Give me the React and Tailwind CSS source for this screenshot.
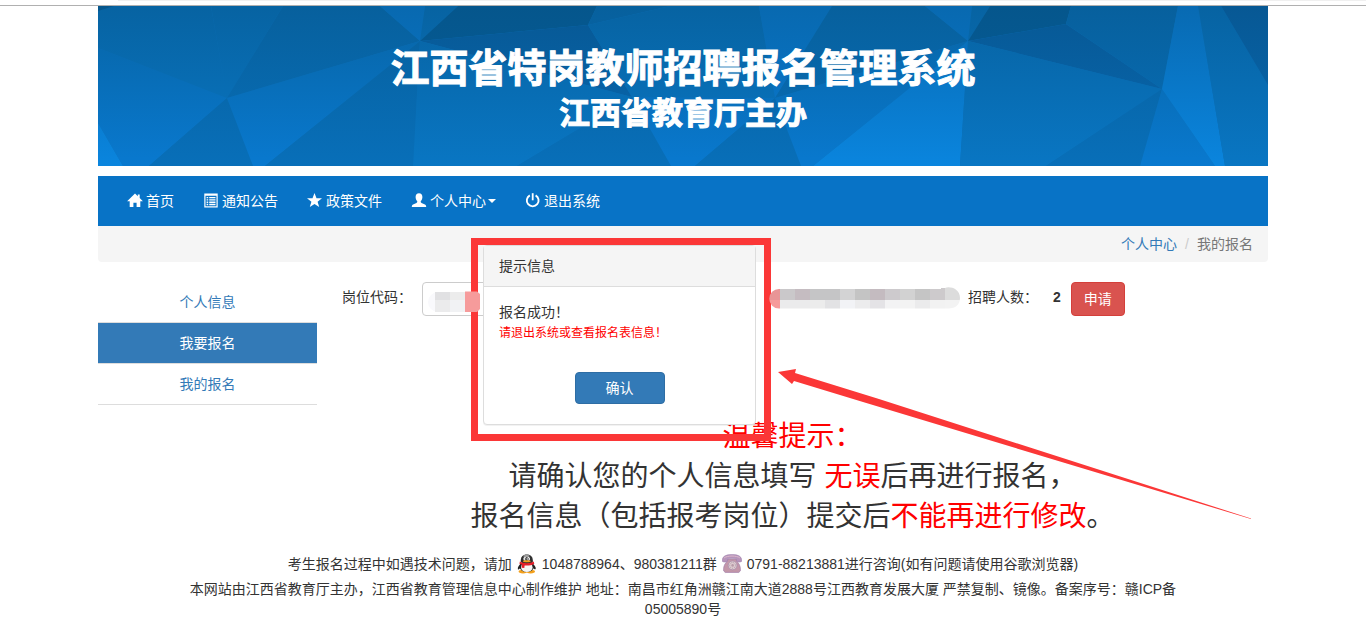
import React from "react";

const FACETS = [
  ["0,0 113,0 129,92 0,42", "mid"],
  ["113,0 185,0 129,92", "mid"],
  ["185,0 282,0 322,35 129,92", "dim"],
  ["0,0 16,0 0,5", "dark"],
  ["0,42 129,92 51,160 25,160 0,117", "soft"],
  ["0,117 25,160 0,160", "bright"],
  ["129,92 51,160 155,160", "dim"],
  ["129,92 322,35 167,160 155,160", "soft"],
  ["322,35 167,160 315,160", "dim"],
  ["282,0 327,0 322,35", "light"],
  ["327,0 360,0 322,35", "mid"],
  ["360,0 499,0 490,19 322,35", "dark"],
  ["499,0 572,0 490,19", "dim"],
  ["322,35 490,19 534,91", "deep"],
  ["322,35 534,91 419,160 315,160", "mid"],
  ["534,91 419,160 573,160", "dim"],
  ["572,0 661,0 677,92 534,91 490,19", "mid"],
  ["534,91 677,92 597,160 573,160", "soft"],
  ["677,92 597,160 703,160", "dim"],
  ["661,0 734,0 677,92", "light"],
  ["734,0 827,0 870,35 677,92", "dim"],
  ["677,92 870,35 715,160 703,160", "soft"],
  ["870,35 715,160 862,160", "bright"],
  ["827,0 874,0 870,35", "light"],
  ["874,0 892,0 870,35", "mid"],
  ["892,0 973,0 968,18 870,35", "dark"],
  ["870,35 968,18 1064,83", "deep"],
  ["870,35 1064,83 948,160 862,160", "mid"],
  ["973,0 1080,0 1064,83 968,18", "dim"],
  ["1064,83 948,160 1042,160", "dim"],
  ["1064,83 1042,160 1117,160", "soft"],
  ["1080,0 1100,0 1127,160 1117,160 1064,83", "bright"],
  ["1100,0 1123,0 1170,79 1170,160 1127,160", "mid"],
  ["1123,0 1170,0 1170,79", "deep"],
];

const TONES = {
  dark: ["#05568c", "#06609e"],
  deep: ["#075894", "#0869b2"],
  dim: ["#07609d", "#086fb9"],
  mid: ["#0763a2", "#0976c3"],
  soft: ["#0764a4", "#0979cf"],
  light: ["#0869b0", "#0979d0"],
  bright: ["#086ab2", "#0a85de"],
};

function Banner() {
  return (
    <header className="relative h-40 overflow-hidden bg-[#086cb4]">
      <svg className="absolute inset-0 h-full w-full" viewBox="0 0 1170 160" preserveAspectRatio="none" aria-hidden="true">
        <defs>
          {Object.entries(TONES).map(([name, [from, to]]) => (
            <linearGradient key={name} id={name} gradientUnits="userSpaceOnUse" x1="0" y1="0" x2="0" y2="160">
              <stop offset="0" stopColor={from} />
              <stop offset="1" stopColor={to} />
            </linearGradient>
          ))}
        </defs>
        {FACETS.map(([points, tone]) => (
          <polygon key={points} points={points} fill={`url(#${tone})`} />
        ))}
      </svg>
      <div className="relative flex flex-col items-center pt-9 font-bold text-white [-webkit-text-stroke:1px_white]">
        <h1 className="text-[39px] leading-[54px]">江西省特岗教师招聘报名管理系统</h1>
        <p className="text-[31px] leading-[36px]">江西省教育厅主办</p>
      </div>
    </header>
  );
}

function Icon({ children }) {
  return (
    <svg className="h-3.5 w-3.5 shrink-0 overflow-visible" viewBox="0 0 14 14" fill="currentColor" aria-hidden="true">
      {children}
    </svg>
  );
}

const HomeIcon = () => (
  <Icon>
    <path d="M7 -0.600 L9.8 2.200 V0.400 H11.700 V4.100 L14.900 7.300 H12.300 V13 H8.600 V8.800 H5.400 V13 H1.700 V7.300 H-0.900 Z" />
  </Icon>
);
const ListIcon = () => (
  <Icon>
    <path fillRule="evenodd" d="M0.3 -0.500H13.7V13.500H0.3Z M1.5 1.800V12.300H12.5V1.800Z M2.6 2.900H4.2V4.300H2.6Z M5.2 2.900H11.5V4.300H5.2Z M2.6 5.2H4.2V6.600H2.6Z M5.2 5.2H11.5V6.600H5.2Z M2.6 7.5H4.2V8.900H2.6Z M5.2 7.5H11.5V8.900H5.2Z M2.6 9.800H4.2V11.200H2.6Z M5.2 9.800H11.5V11.200H5.2Z" />
  </Icon>
);
const StarIcon = () => (
  <Icon>
    <path d="M6.500 -1 L8.500 4.300 H14 L9.6 7.700 L11.2 13 L6.500 9.900 L1.800 13 L3.400 7.700 L-1 4.300 H4.500 Z" />
  </Icon>
);
const UserIcon = () => (
  <Icon>
    <path d="M7 -0.800 C9.2 -0.800 10.4 0.800 10.4 2.900 C10.4 4.700 9.6 6.200 8.8 7.100 C8.6 8.100 8.9 8.600 9.5 8.900 L13 10.400 C13.900 10.900 14.200 11.500 14.200 13 H-0.200 C-0.200 11.500 0.100 10.900 1 10.400 L4.500 8.900 C5.100 8.600 5.400 8.100 5.200 7.100 C4.400 6.200 3.600 4.700 3.600 2.900 C3.600 0.800 4.800 -0.800 7 -0.800 Z" />
  </Icon>
);
const PowerIcon = () => (
  <Icon>
    <path d="M3.800 1.300 A5.900 5.900 0 1 0 9.600 1.300" fill="none" stroke="currentColor" strokeWidth="1.9" />
    <path d="M5.800 -0.800H7.600V6.300H5.800Z" />
  </Icon>
);

const NAV = [
  ["首页", HomeIcon],
  ["通知公告", ListIcon],
  ["政策文件", StarIcon],
  ["个人中心", UserIcon, true],
  ["退出系统", PowerIcon],
];

function QQIcon() {
  return (
    <svg className="h-5 w-5 shrink-0" viewBox="0 0 20 20" role="img" aria-label="QQ">
      <ellipse cx="6" cy="17.600" rx="4.4" ry="1.8" fill="#f3a01c" />
      <ellipse cx="13.6" cy="17.600" rx="4.4" ry="1.8" fill="#f3a01c" />
      <path d="M4.5 9 C2 11 0.4 13.5 0.900 15.2 C1.6 15.8 2.800 14.8 3.600 13.8 L16 13.8 C17 15 18 15.8 18.7 15 C19.200 13 17.3 10.8 15 9 Z" fill="#202020" />
      <ellipse cx="9.800" cy="12.8" rx="7.200" ry="5.2" fill="#222" />
      <ellipse cx="9.800" cy="13.4" rx="5.8" ry="4.7" fill="#f6f6f6" />
      <path d="M3.700 7.8 C3.600 3 5.800 0.600 9.800 0.600 C13.8 0.600 16 3 15.900 7.8 L14 10 H6 Z" fill="#303030" />
      <ellipse cx="9.5" cy="2.1" rx="3.2" ry="1.1" fill="#a5a5a5" />
      <ellipse cx="7.900" cy="4.800" rx="1.5" ry="1.9" fill="#fff" />
      <ellipse cx="11.5" cy="4.800" rx="1.5" ry="1.9" fill="#fff" />
      <circle cx="8.4" cy="5" r="0.7" fill="#111" />
      <circle cx="11.1" cy="5" r="0.7" fill="#111" />
      <ellipse cx="9.800" cy="7.3" rx="3.8" ry="1" fill="#f3a01c" />
      <path d="M2.900 7.500 C6.500 9.800 13 9.800 16.7 7.500 L17.3 9.700 C14 11.600 10.5 11.800 7.600 11.400 L7.3 14 L4.600 13.8 L5 10.800 L2.400 9.700 Z" fill="#e5202b" />
    </svg>
  );
}

function PhoneIcon() {
  return (
    <svg className="h-5 w-5 shrink-0" viewBox="0 0 20 20" role="img" aria-label="电话">
      <path d="M5.5 5 H14.5 L15.6 8.2 C17.8 10.4 18.800 13.7 18.3 17 L16.8 18.4 H3.2 L1.7 17 C1.200 13.7 2.2 10.4 4.4 8.2 Z" fill="#c397a9" stroke="#a27fa9" strokeWidth="0.7" />
      <path d="M0.4 7.4 C-0.2 3 2.8 0.6 10 0.6 C17.2 0.6 20.2 3 19.6 7.4 C17.8 8.4 15.5 8.2 14.5 7.2 L14.3 4.8 C11.5 4.2 8.5 4.2 5.7 4.8 L5.5 7.2 C4.5 8.2 2.2 8.4 0.4 7.4 Z" fill="#b794bb" stroke="#9f84af" strokeWidth="0.6" />
      <path d="M2.2 3.9 C5 1.4 15 1.4 17.8 3.9" fill="none" stroke="#dcb9cc" strokeWidth="1" />
      <circle cx="10.6" cy="11.4" r="4.4" fill="#dfcbd0" stroke="#a58baa" strokeWidth="0.7" />
      <circle cx="10.6" cy="11.4" r="2.9" fill="none" stroke="#aa9cab" strokeWidth="1" strokeDasharray="1 1" />
      <circle cx="10.6" cy="11.4" r="1.3" fill="#b79ba8" />
    </svg>
  );
}

const CODE_BLOCKS = [
  [7, "#e1e1e3", "#ebebec"],
  [22, "#ececec", "#f1f2f4"],
];

const NAME_TOP = ["#cac8ca", "#c5bcc1", "#c5c5c6", "#c5c5c6", "#d3d3d4", "#c4c4c4", "#c4bbc0", "#cdcacd", "#d2d2d2", "#c5c5c5", "#cdcacc", "#dcdcdc"];
const NAME_BOTTOM = ["#ebebec", "#ebebec", "#ececec", "#e2e2e4", "#f2f3f6", "#ececed", "#e4e3e6", "#f3f3f4", "#f3f3f3", "#ebebec", "#f2f2f2", "#f3f3f3"];

function SignUpForm() {
  return (
    <form className="flex h-[34px] items-start pl-[25px]" onSubmit={(e) => e.preventDefault()}>
      <label htmlFor="code" className="w-20 shrink-0 leading-[30px]">
        岗位代码：
      </label>
      <div className="relative mr-[47px] w-[300px] shrink-0">
        <input id="code" type="text" className="h-[34px] w-full rounded border border-[#ccc] bg-white px-3 outline-none" />
        <svg className="absolute top-2 left-1.5 z-20 h-6 w-[54px]" viewBox="0 0 54 24" aria-hidden="true">
          <circle cx="10" cy="12" r="10" fill="#f9f9fc" />
          {CODE_BLOCKS.map(([x, top, bottom]) => (
            <g key={x}>
              <rect x={x} y="2" width="15" height="8" fill={top} />
              <rect x={x} y="10" width="15" height="12" fill={bottom} />
            </g>
          ))}
          <path d="M37 1.500H49 L52 4 V19 L49 22 H37Z" fill="#f69b9b" />
        </svg>
      </div>
      <svg className="relative z-20 mt-[5px] mr-2 h-[22px] w-[191px] shrink-0" viewBox="0 0 191 22" aria-hidden="true">
        <defs>
          <clipPath id="strip">
            <path d="M10 2 H172 V1 H176 C180 -1 191 1 191 11 C191 18 186 22 178 21.500 H10 A9.700 9.700 0 0 1 10 2Z" />
          </clipPath>
        </defs>
        <g clipPath="url(#strip)">
          <rect width="11" height="13" fill="#e89596" />
          <rect y="13" width="11" height="9" fill="#f69b9b" />
          {NAME_TOP.map((color, i) => (
            <g key={i}>
              <rect x={11 + i * 15} y="0" width="15" height="13" fill={color} />
              <rect x={11 + i * 15} y="13" width="15" height="9" fill={NAME_BOTTOM[i]} />
            </g>
          ))}
        </g>
      </svg>
      <span className="w-[85px] shrink-0 leading-[30px]">招聘人数：</span>
      <strong className="mr-2.5 leading-[30px]">2</strong>
      <button type="submit" className="h-[34px] shrink-0 rounded border border-[#d43f3a] bg-[#d9534f] px-3 text-white">
        申请
      </button>
    </form>
  );
}

function SuccessDialog() {
  return (
    <div className="absolute top-[232px] left-[373px] z-10 w-[300px] border-7 border-[#fb3737] pr-2 pb-[9px] pl-[5px]">
      <section role="dialog" aria-labelledby="dialog-title" className="rounded border border-[#ddd] bg-white shadow-2xs">
        <h2 id="dialog-title" className="border-b border-[#ddd] bg-[#f5f5f5] px-[15px] py-2.5">
          提示信息
        </h2>
        <div className="px-[15px] pt-[15px] pb-5">
          <p>报名成功！</p>
          <p className="text-xs leading-[22px] text-[#f00]">请退出系统或查看报名表信息！</p>
          <div className="mt-7 flex justify-center">
            <button type="button" className="h-8 w-[90px] rounded border border-[#2e6da4] bg-[#337ab7] text-white">
              确认
            </button>
          </div>
        </div>
      </section>
    </div>
  );
}

export default function App() {
  return (
    <div className="bg-white text-sm leading-5 text-[#333] [font-family:'Liberation_Sans','Noto_Sans_CJK_SC',sans-serif]">
      <div className="h-1.5 border-b border-[#b0b0b0] pl-[118px]">
        <div className="h-px bg-[#f0f0f0]" />
      </div>
      <div className="relative mx-auto max-w-[1170px]">
        <Banner />
        <nav className="mt-2.5 flex h-[50px] items-center gap-[30px] bg-[#0873c6] px-[30px] text-white">
          {NAV.map(([text, Glyph, menu]) => (
            <a key={text} href="#" className="flex items-center gap-1">
              <Glyph />
              <span className="flex items-center gap-0.5">
                {text}
                {menu && <span className="border-x-4 border-t-4 border-x-transparent border-t-white" />}
              </span>
            </a>
          ))}
        </nav>
        <ol className="flex justify-end rounded-b bg-[#f5f5f5] px-[15px] py-2">
          <li>
            <a href="#" className="text-[#337ab7]">
              个人中心
            </a>
          </li>
          <li className="px-2 text-[#ccc]" aria-hidden="true">
            /
          </li>
          <li className="text-[#777]">我的报名</li>
        </ol>

        <div className="mt-5 flex">
          <aside className="w-[219px] shrink-0">
            <ul className="text-center leading-10">
              <li className="border-b border-[#ddd]">
                <a href="#" className="block text-[#337ab7]">个人信息</a>
              </li>
              <li className="border-b border-[#ddd]">
                <a href="#" className="block bg-[#337ab7] text-white">我要报名</a>
              </li>
              <li className="border-b border-[#ddd]">
                <a href="#" className="block text-[#337ab7]">我的报名</a>
              </li>
            </ul>
          </aside>
          <main className="min-w-0 flex-1">
            <SignUpForm />
            <div className="mt-[101px] text-center text-[28px] leading-10">
              <p className="text-[#f00]">温馨提示：</p>
              <p>
                请确认您的个人信息填写 <span className="text-[#f00]">无误</span>后再进行报名，
              </p>
              <p>
                报名信息（包括报考岗位）提交后<span className="text-[#f00]">不能再进行修改</span>。
              </p>
            </div>
          </main>
        </div>

        <footer className="mx-auto mt-[17px] max-w-[1000px] text-center">
          <p className="flex items-center justify-center gap-[5px]">
            考生报名过程中如遇技术问题，请加 <QQIcon /> 1048788964、980381211群 <PhoneIcon />{" "}
            0791-88213881进行咨询(如有问题请使用谷歌浏览器)
          </p>
          <p className="mt-[5px]">
            本网站由江西省教育厅主办，江西省教育管理信息中心制作维护 地址：南昌市红角洲赣江南大道2888号江西教育发展大厦
            严禁复制、镜像。备案序号：赣ICP备05005890号
          </p>
        </footer>

        <SuccessDialog />
        <svg className="pointer-events-none absolute top-[362px] left-[680px] z-10 h-[152px] w-[474px]" viewBox="0 0 474 152" fill="#fb3737" aria-hidden="true">
          <polygon points="0,4 18,1 17,5 101,31 473,150.500 473,151 85,34 16,13 14,16" />
        </svg>
      </div>
    </div>
  );
}
